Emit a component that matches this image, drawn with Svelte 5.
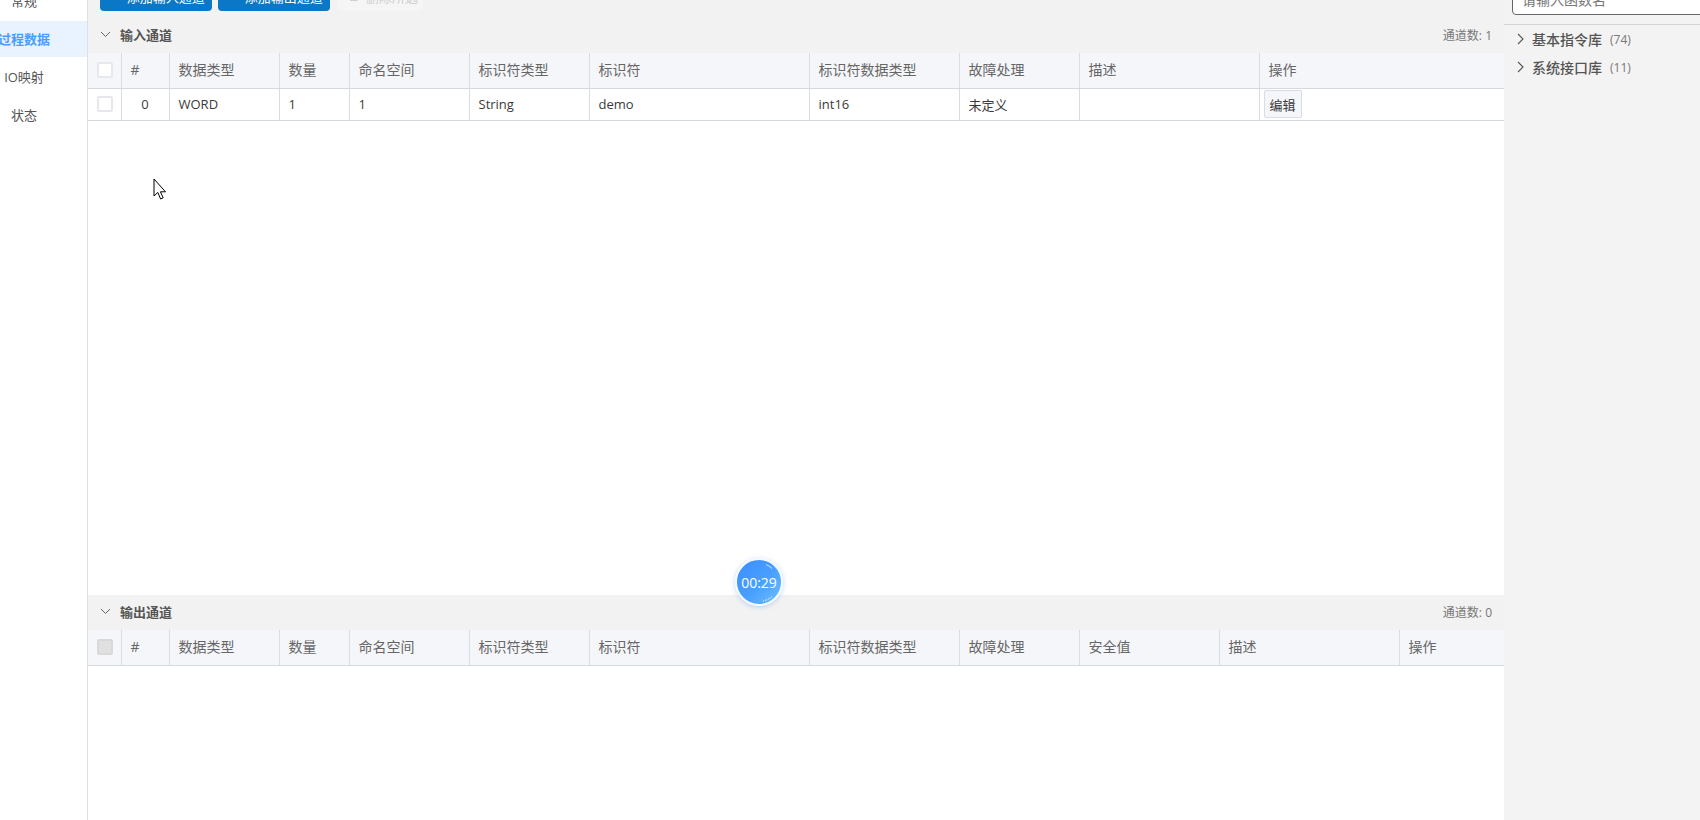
<script>
  const nav = ['常规', '过程数据', 'IO映射', '状态'];
  const inputCols = [
    ['#', 48], ['数据类型', 110], ['数量', 70], ['命名空间', 120], ['标识符类型', 120],
    ['标识符', 220], ['标识符数据类型', 150], ['故障处理', 120], ['描述', 180], ['操作', 245]
  ];
  const outputCols = [
    ['#', 48], ['数据类型', 110], ['数量', 70], ['命名空间', 120], ['标识符类型', 120],
    ['标识符', 220], ['标识符数据类型', 150], ['故障处理', 120], ['安全值', 140], ['描述', 180], ['操作', 105]
  ];
  const row = ['WORD', '1', '1', 'String', 'demo', 'int16', '未定义', ''];
</script>

<div class="page">
  <aside class="side">
    {#each nav as item, i}
      <div class="nav" class:active={i === 1}><span>{item}</span></div>
    {/each}
  </aside>

  <main class="main">
    <div class="toolbar">
      <button class="btn primary"><span class="plus">+</span>添加输入通道</button>
      <button class="btn primary"><span class="plus">+</span>添加输出通道</button>
      <button class="btn muted">
        <svg width="12" height="12" viewBox="0 0 12 12" fill="none" stroke="#cfcfcf"><path d="M1.5 3h9M4 3V1.5h4V3M2.5 3v7.5h7V3" /></svg>
        删除所选
      </button>
    </div>

    <section class="panel upper">
      <header class="phead">
        <svg class="chev" width="11" height="7" viewBox="0 0 11 7" fill="none" stroke="#666"><path d="M1 1l4.5 4.5L10 1" /></svg>
        <h2>输入通道</h2>
        <span class="count">通道数: 1</span>
      </header>
      <table>
        <colgroup>
          <col style="width:33px" />
          {#each inputCols as c}<col style="width:{c[1]}px" />{/each}
        </colgroup>
        <thead>
          <tr>
            <th class="chk"><span class="box"></span></th>
            {#each inputCols as c}<th>{c[0]}</th>{/each}
          </tr>
        </thead>
        <tbody>
          <tr>
            <td class="chk"><span class="box"></span></td>
            <td class="num">0</td>
            {#each row as v}<td>{v}</td>{/each}
            <td class="act"><button class="edit">编辑</button></td>
          </tr>
        </tbody>
      </table>
    </section>

    <section class="panel lower">
      <header class="phead">
        <svg class="chev" width="11" height="7" viewBox="0 0 11 7" fill="none" stroke="#666"><path d="M1 1l4.5 4.5L10 1" /></svg>
        <h2>输出通道</h2>
        <span class="count">通道数: 0</span>
      </header>
      <table>
        <colgroup>
          <col style="width:33px" />
          {#each outputCols as c}<col style="width:{c[1]}px" />{/each}
        </colgroup>
        <thead>
          <tr>
            <th class="chk"><span class="box off"></span></th>
            {#each outputCols as c}<th>{c[0]}</th>{/each}
          </tr>
        </thead>
      </table>
    </section>
  </main>

  <aside class="lib">
    <div class="search"><input placeholder="请输入函数名" /></div>
    <div class="lib-row">
      <svg width="8" height="12" viewBox="0 0 8 12" fill="none" stroke="#555" stroke-width="1.1"><path d="M1 1l5 5-5 5" /></svg>
      <b>基本指令库</b><small>(74)</small>
    </div>
    <div class="lib-row">
      <svg width="8" height="12" viewBox="0 0 8 12" fill="none" stroke="#555" stroke-width="1.1"><path d="M1 1l5 5-5 5" /></svg>
      <b>系统接口库</b><small>(11)</small>
    </div>
  </aside>

  <div class="timer">
    <svg class="glint" width="44" height="44" viewBox="0 0 44 44" fill="none" stroke="#ffffff" stroke-opacity=".75">
      <path d="M29 4.5a19 19 0 0 1 6 4" />
      <path d="M35 36.5a20 20 0 0 1-9 4.5" stroke-dasharray="2 1" />
    </svg>
    00:29
  </div>

  <svg class="cursor" width="14" height="23" viewBox="0 0 14 23">
    <path d="M1 1v17l3.8-3.6 2.8 6.6 2.6-1.2-2.8-6H12.5z" fill="#fff" stroke="#000" stroke-width="1" />
  </svg>
</div>

<style>
  :global(body) {
    margin: 0;
    overflow: hidden;
    background: #fff;
  }
  .page {
    position: relative;
    display: flex;
    height: 844px;
    margin-top: -24px;
    overflow: hidden;
    font-family: "Open Sans", "Noto Sans CJK SC", sans-serif;
    font-size: 13px;
    color: #333;
  }
  .side {
    flex: 0 0 88px;
    min-width: 0;
    display: flex;
    flex-direction: column;
    gap: 2px;
    padding-top: 6px;
    border-right: 1px solid #e0e0e0;
    background: #fff;
    box-sizing: border-box;
    color: #555;
  }
  .nav {
    height: 36px;
    display: flex;
    align-items: center;
    padding-right: 39px;
    justify-content: center;
    white-space: nowrap;
  }
  .active {
    height: 34px;
    padding-bottom: 2px;
    margin-top: 1px;
    margin-bottom: -1px;
    background: #e8f3ff;
    color: #4a9eff;
    font-weight: 600;
  }
  .main {
    flex: 0 0 1416px;
    display: flex;
    flex-direction: column;
    min-width: 0;
    background: #fff;
  }
  .toolbar {
    flex: 0 0 42px;
    display: flex;
    gap: 6px;
    padding: 5px 0 0 12px;
    box-sizing: border-box;
    background: #f2f2f2;
  }
  .btn {
    height: 30px;
    border: 0;
    border-radius: 4px;
    font: inherit;
    display: flex;
    align-items: center;
    justify-content: center;
    padding: 0;
  }
  .primary {
    width: 112px;
    background: #0a78c6;
    color: #fff;
  }
  .plus {
    margin-right: 12px;
  }
  .muted {
    width: 86px;
    margin-left: 1px;
    gap: 6px;
    padding-left: 6px;
    background: #f5f5f5;
    color: #cfcfcf;
  }
  .panel {
    display: flex;
    flex-direction: column;
    min-height: 0;
  }
  .upper {
    flex: 0 0 577px;
  }
  .lower {
    flex: 1;
  }
  .phead {
    flex: 0 0 35px;
    display: flex;
    align-items: center;
    box-sizing: border-box;
    padding: 0 12px 2px;
    background: #f2f2f2;
  }
  .chev {
    margin-right: 9px;
  }
  h2 {
    margin: 0;
    font-size: 13px;
    font-weight: 600;
    color: #555;
  }
  .count {
    margin-left: auto;
    font-size: 12px;
    color: #777;
  }
  table {
    width: 1416px;
    table-layout: fixed;
    border-collapse: collapse;
  }
  th {
    height: 35px;
    padding: 0 8px 2px 9px;
    background: #f5f6fa;
    border-right: 1px solid #d8dce3;
    border-bottom: 1px solid #d4d8df;
    box-sizing: border-box;
    font-size: 14px;
    font-weight: 400;
    text-align: left;
    color: #666;
  }
  td {
    height: 32px;
    padding: 0 8px 0 9px;
    border-right: 1px solid #d8dce3;
    border-bottom: 1px solid #d4d8df;
    box-sizing: border-box;
    color: #3a3a3a;
  }
  th:last-child,
  td:last-child {
    border-right: 0;
  }
  .chk {
    padding: 0 0 0 1px;
    text-align: center;
  }
  .box {
    display: block;
    width: 16px;
    height: 16px;
    margin: 0 auto;
    box-sizing: border-box;
    border: 2px solid #e6e8ee;
    border-radius: 2px;
    background: #fff;
  }
  .off {
    background: #e0e0e0;
    border-color: #d8d8d8;
  }
  .num {
    padding: 0 8px;
    text-align: center;
  }
  .act {
    padding: 0 0 0 4px;
  }
  .edit {
    display: block;
    width: 38px;
    height: 28px;
    padding: 0;
    border: 1px solid #d8dce6;
    border-radius: 2px;
    background: #f5f6fa;
    font: inherit;
    color: #3a3a3a;
  }
  .lib {
    flex: 1;
    min-width: 0;
    background: #f3f3f3;
    overflow: hidden;
  }
  .search {
    height: 49px;
    padding: 7px 0 0 8px;
    box-sizing: border-box;
    border-bottom: 1px solid #d5d5d5;
  }
  input {
    display: block;
    width: 220px;
    height: 32px;
    padding: 0 9px;
    box-sizing: border-box;
    border: 1px solid #666;
    border-radius: 4px;
    background: #fff;
    font: inherit;
    font-size: 14px;
    outline: none;
  }
  input::placeholder {
    color: #777;
  }
  .lib-row {
    height: 28px;
    display: flex;
    align-items: center;
    padding-left: 13px;
  }
  .lib-row b {
    margin-left: 7px;
    font-size: 14px;
    font-weight: 500;
    color: #555;
  }
  .lib-row small {
    margin-left: 8px;
    font-size: 12px;
    color: #777;
  }
  .timer {
    position: absolute;
    left: 735px;
    top: 582px;
    width: 48px;
    height: 48px;
    box-sizing: border-box;
    border: 2px solid #f3f9ff;
    border-radius: 50%;
    background: linear-gradient(135deg, #3a8dff 0%, #4aa0ff 55%, #6cc0ff 100%);
    box-shadow: 0 1px 5px rgba(80, 140, 220, 0.35);
    color: #fff;
    font-size: 14px;
    display: flex;
    align-items: center;
    justify-content: center;
  }
  .glint {
    position: absolute;
    left: 0;
    top: 0;
  }
  .cursor {
    position: absolute;
    left: 153px;
    top: 202px;
  }
</style>
